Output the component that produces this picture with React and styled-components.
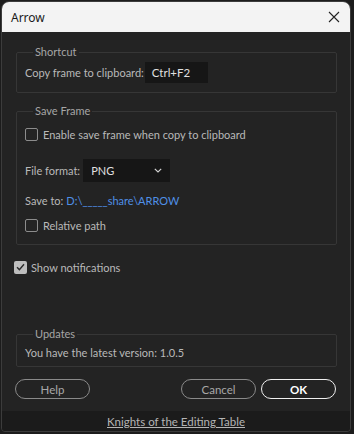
import React from 'react'
import styled, { createGlobalStyle } from 'styled-components'

const Global = createGlobalStyle`
  html, body {
    margin: 0;
    padding: 0;
    background: #1c1c1c;
  }
  body {
    font-family: Lato, "Noto Sans", sans-serif;
  }
`

const Window = styled.div`
  margin: 1px 0 0 1px;
  width: 350px;
  height: 431px;
  box-sizing: border-box;
  border: 1px solid #3c3c3c;
  border-radius: 8px 8px 4px 4px;
  overflow: hidden;
  display: flex;
  flex-direction: column;
  background: #232323;
`

const TitleBar = styled.div`
  height: 30px;
  flex: none;
  background: #f3f3f3;
  display: flex;
  align-items: center;
  justify-content: space-between;
  padding: 0 8px 0 9px;
  font-family: "Noto Sans", "Open Sans", sans-serif;
  font-size: 12px;
  color: #1a1a1a;
`

const Close = styled.svg`
  width: 12px;
  height: 12px;
  margin-right: 2px;
`

const Body = styled.div`
  flex: 1;
  display: flex;
  flex-direction: column;
  padding: 0 13px 0 14px;
  color: #b9b9b9;
  font-size: 11px;
`

const Group = styled.fieldset`
  margin: ${p => p.$top}px 0 0;
  padding: ${p => p.$pad};
  border: 1px solid #363636;
  border-radius: 2px;
  display: flex;
  flex-direction: column;
`

const Legend = styled.legend`
  padding: 0 2px;
  margin-left: 8px;
  color: #a6a6a6;
  font-size: 11px;
  line-height: 14px;
`

const Row = styled.div`
  display: flex;
  align-items: center;
  gap: ${p => p.$gap || 4}px;
  height: ${p => p.$h || 16}px;
  margin-top: ${p => p.$mt || 0}px;
  margin-left: ${p => p.$ml || 0}px;
`

const KeyInput = styled.div`
  width: 63px;
  height: 21px;
  box-sizing: border-box;
  background: #161616;
  color: #e0e0e0;
  display: flex;
  align-items: center;
  padding-left: 7px;
  font-size: 11.5px;
`

const Select = styled.div`
  width: 87px;
  height: 23px;
  box-sizing: border-box;
  background: #161616;
  color: #e0e0e0;
  display: flex;
  align-items: center;
  justify-content: space-between;
  padding: 0 8px 0 8px;
  font-size: 11px;
`

const Box = styled.span`
  width: 13px;
  height: 13px;
  box-sizing: border-box;
  border-radius: 2px;
  border: ${p => (p.$checked ? 'none' : '1.5px solid #8c8c8c')};
  background: ${p => (p.$checked ? '#bdbdbd' : 'transparent')};
  display: inline-flex;
  align-items: center;
  justify-content: center;
  flex: none;
`

const Link = styled.span`
  color: #4f8fe6;
`

const Buttons = styled.div`
  display: flex;
  align-items: center;
  margin-top: 12px;
  margin-left: -1px;
`

const Button = styled.button`
  width: 75px;
  height: 20px;
  box-sizing: border-box;
  border-radius: 10px;
  border: 1.5px solid ${p => (p.$primary ? '#f0f0f0' : '#8a8a8a')};
  background: transparent;
  color: ${p => (p.$primary ? '#ffffff' : '#a8a8a8')};
  font-family: Lato, "Noto Sans", sans-serif;
  font-weight: ${p => (p.$primary ? 700 : 400)};
  font-size: 11.5px;
  padding: 0;
  margin-left: ${p => p.$ml || 0}px;
`

const Footer = styled.div`
  height: 20px;
  flex: none;
  background: #1b1b1b;
  display: flex;
  align-items: center;
  justify-content: center;
  color: #b5b5b5;
  font-size: 11.5px;
  text-decoration: underline;
`

const Spacer = styled.div`
  flex: 1;
`

const BottomGap = styled.div`
  height: 12px;
`

function Check({ checked }) {
  return (
    <Box $checked={checked}>
      {checked && (
        <svg width="9" height="8" viewBox="0 0 9 8">
          <path d="M1 4.2 L3.4 6.6 L8 1.2" fill="none" stroke="#2a2a2a" strokeWidth="1.4" />
        </svg>
      )}
    </Box>
  )
}

export default function App() {
  return (
    <>
      <Global />
      <Window>
        <TitleBar>
          <span>Arrow</span>
          <Close viewBox="0 0 12 12">
            <path d="M1 1 L11 11 M11 1 L1 11" stroke="#222" strokeWidth="1.1" />
          </Close>
        </TitleBar>
        <Body>
          <Group $top={13} $pad="3px 8px 9px 8px">
            <Legend>Shortcut</Legend>
            <Row $h={21} $gap={1}>
              <span>Copy frame to clipboard:</span>
              <KeyInput>Ctrl+F2</KeyInput>
            </Row>
          </Group>

          <Group $top={11} $pad="8px 8px 11px 8px">
            <Legend>Save Frame</Legend>
            <Row $gap={5}>
              <Check />
              <span>Enable save frame when copy to clipboard</span>
            </Row>
            <Row $h={23} $mt={17} $gap={3}>
              <span>File format:</span>
              <Select>
                <span>PNG</span>
                <svg width="8" height="5" viewBox="0 0 8 5">
                  <path d="M0.8 0.8 L4 4 L7.2 0.8" fill="none" stroke="#d0d0d0" strokeWidth="1.2" />
                </svg>
              </Select>
            </Row>
            <Row $mt={10} $gap={3}>
              <span>Save to:</span>
              <Link>D:\_____share\ARROW</Link>
            </Row>
            <Row $mt={9} $gap={5}>
              <Check />
              <span>Relative path</span>
            </Row>
          </Group>

          <Row $mt={14} $gap={4} $ml={-2}>
            <Check checked />
            <span>Show notifications</span>
          </Row>

          <Spacer />

          <Group $top={0} $pad="3px 8px 6px 8px">
            <Legend>Updates</Legend>
            <Row>
              <span>You have the latest version: 1.0.5</span>
            </Row>
          </Group>

          <Buttons>
            <Button>Help</Button>
            <Button $ml={91}>Cancel</Button>
            <Button $primary $ml={5}>OK</Button>
          </Buttons>
          <BottomGap />
        </Body>
        <Footer>Knights of the Editing Table</Footer>
      </Window>
    </>
  )
}
